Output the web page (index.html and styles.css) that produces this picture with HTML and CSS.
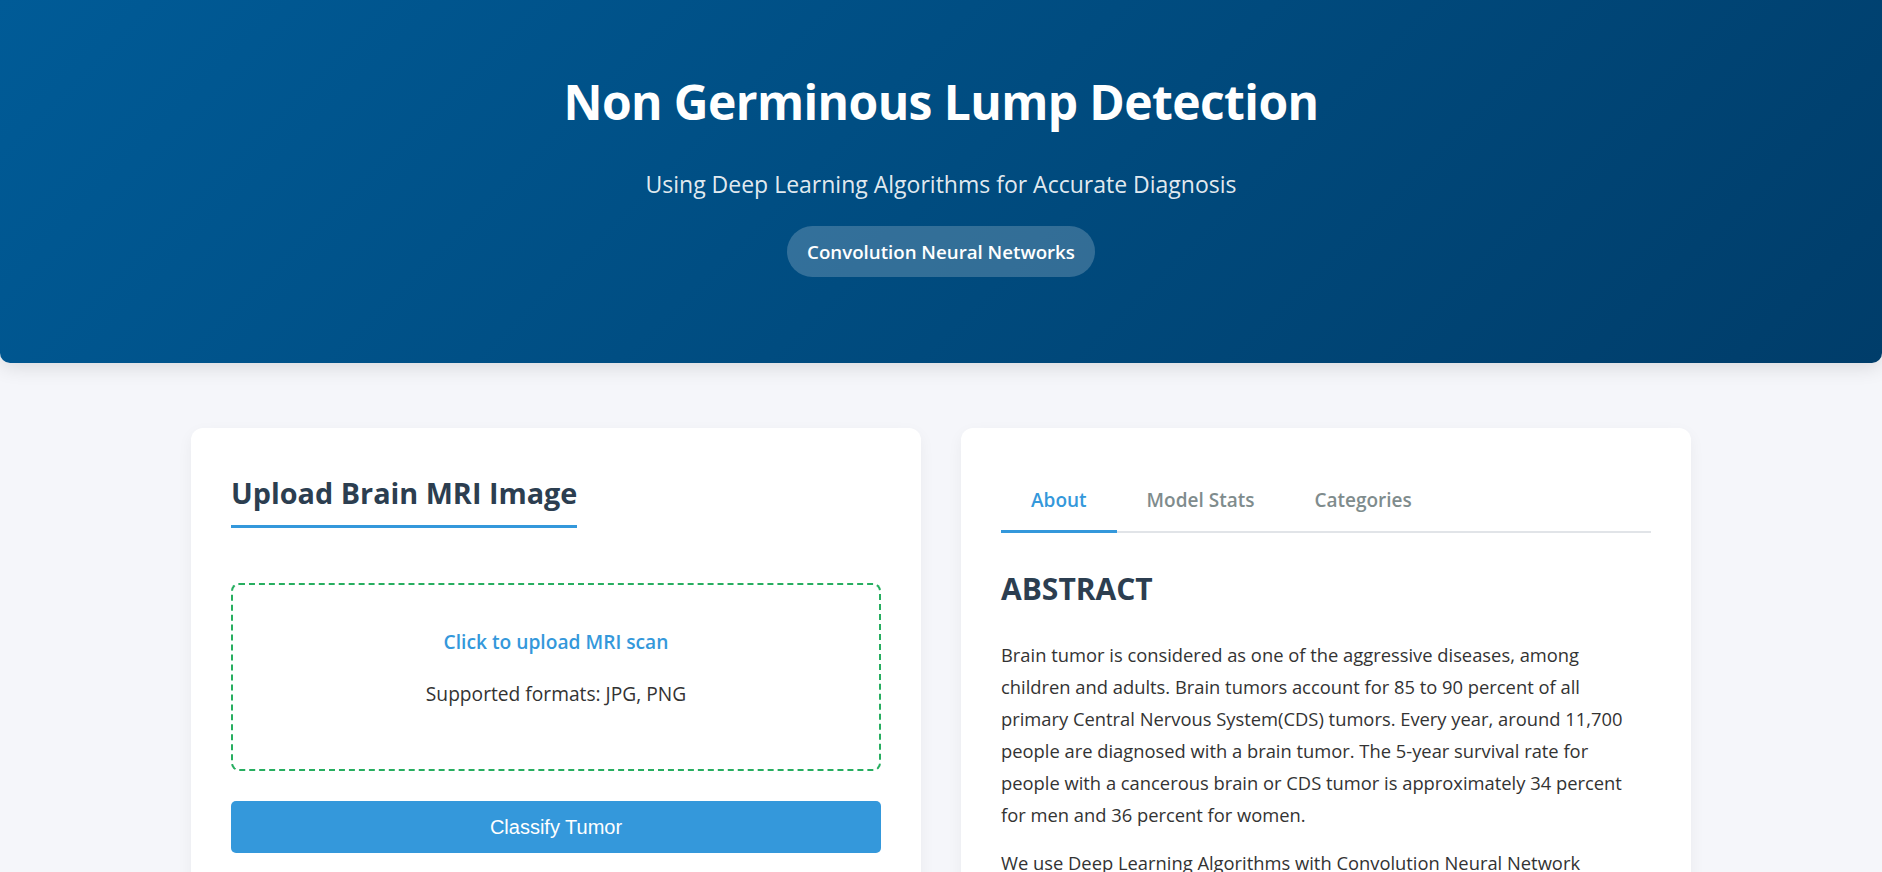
FILE: index.html
```html
<!DOCTYPE html>
<html lang="en">
<head>
<meta charset="utf-8">
<title>Non Germinous Lump Detection</title>
<link rel="stylesheet" href="styles.css">
</head>
<body>
<header class="hero">
  <h1 class="hero-title">Non Germinous Lump Detection</h1>
  <p class="hero-subtitle">Using Deep Learning Algorithms for Accurate Diagnosis</p>
  <span class="hero-badge">Convolution Neural Networks</span>
</header>

<main class="container">
  <section class="card upload-card">
    <h2 class="section-title">Upload Brain MRI Image</h2>
    <div class="upload-zone">
      <p class="upload-link">Click to upload MRI scan</p>
      <p class="upload-hint">Supported formats: JPG, PNG</p>
    </div>
    <button class="classify-btn" type="button">Classify Tumor</button>
  </section>

  <section class="card info-card">
    <nav class="tabs">
      <button class="tab active" type="button">About</button>
      <button class="tab" type="button">Model Stats</button>
      <button class="tab" type="button">Categories</button>
    </nav>
    <div class="tab-content">
      <h2 class="abstract-title">ABSTRACT</h2>
      <p class="abstract-text">Brain tumor is considered as one of the aggressive diseases, among children and adults. Brain tumors account for 85 to 90 percent of all primary Central Nervous System(CDS) tumors. Every year, around 11,700 people are diagnosed with a brain tumor. The 5-year survival rate for people with a cancerous brain or CDS tumor is approximately 34 percent for men and 36 percent for women.</p>
      <p class="abstract-text">We use Deep Learning Algorithms with Convolution Neural Network architectures to detect and classify brain tumors from MRI scans accurately and quickly.</p>
    </div>
  </section>
</main>
</body>
</html>
```

FILE: styles.css
```css
* {
  box-sizing: border-box;
}

html {
  scrollbar-width: none;
}

body {
  margin: 0;
  background: #f5f6fa;
  font-family: "Open Sans", "Noto Sans", sans-serif;
  color: #333;
}

.hero {
  display: flex;
  flex-direction: column;
  align-items: center;
  padding: 72px 20px 86px;
  background: linear-gradient(135deg, #005b97 0%, #004c80 50%, #003d6a 100%);
  color: #fff;
  text-align: center;
  border-radius: 0 0 10px 10px;
  box-shadow: 0 4px 20px rgba(0, 0, 0, 0.12);
}

.hero-title {
  margin: 0;
  font-size: 48px;
  line-height: 60px;
  font-weight: 700;
  letter-spacing: -0.6px;
}

.hero-subtitle {
  margin: 36px 0 0;
  font-size: 23px;
  line-height: 32px;
  color: rgba(255, 255, 255, 0.9);
}

.hero-badge {
  margin-top: 26px;
  padding: 12px 20px;
  font-size: 18.7px;
  line-height: 27px;
  font-weight: 600;
  background: rgba(255, 255, 255, 0.2);
  border-radius: 26px;
}

.container {
  max-width: 1500px;
  margin: 65px auto 0;
  display: grid;
  grid-template-columns: 1fr 1fr;
  gap: 40px;
  align-items: start;
}

.card {
  background: #fff;
  border-radius: 12px;
  padding: 40px;
  box-shadow: 0 5px 15px rgba(0, 0, 0, 0.05);
}

.section-title {
  width: fit-content;
  margin: 7px 0 0;
  padding-bottom: 14px;
  font-size: 28.8px;
  line-height: 36px;
  font-weight: 700;
  color: #2c3e50;
  border-bottom: 3px solid #3498db;
}

.upload-zone {
  margin-top: 55px;
  padding: 43px 20px 61px;
  border: 2px dashed #27ae60;
  border-radius: 8px;
  text-align: center;
}

.upload-link {
  margin: 0;
  font-size: 19.2px;
  line-height: 28px;
  font-weight: 600;
  color: #3498db;
}

.upload-hint {
  margin: 24px 0 0;
  font-size: 19.2px;
  line-height: 28px;
  color: #333;
}

.classify-btn {
  display: block;
  width: 100%;
  margin-top: 30px;
  padding: 15px;
  border: 0;
  border-radius: 5px;
  background: #3498db;
  color: #fff;
  font-family: "Liberation Sans", Arial, sans-serif;
  font-size: 20px;
  line-height: 22px;
}

.tabs {
  display: flex;
  border-bottom: 2px solid #e1e4e8;
}

.tab {
  margin-bottom: -2px;
  padding: 19px 30px 16px;
  border: 0;
  border-bottom: 3px solid transparent;
  background: none;
  font-family: inherit;
  font-size: 19px;
  line-height: 27px;
  font-weight: 600;
  color: #7f8c8d;
}

.tab.active {
  color: #3498db;
  border-bottom-color: #3498db;
}

.abstract-title {
  margin: 38px 0 0;
  font-size: 30px;
  line-height: 36px;
  font-weight: 700;
  color: #2c3e50;
}

.abstract-text {
  margin: 32px 0 16px;
  font-size: 18.35px;
  line-height: 32px;
  color: #333;
}

.abstract-text + .abstract-text {
  margin-top: 0;
}
```
